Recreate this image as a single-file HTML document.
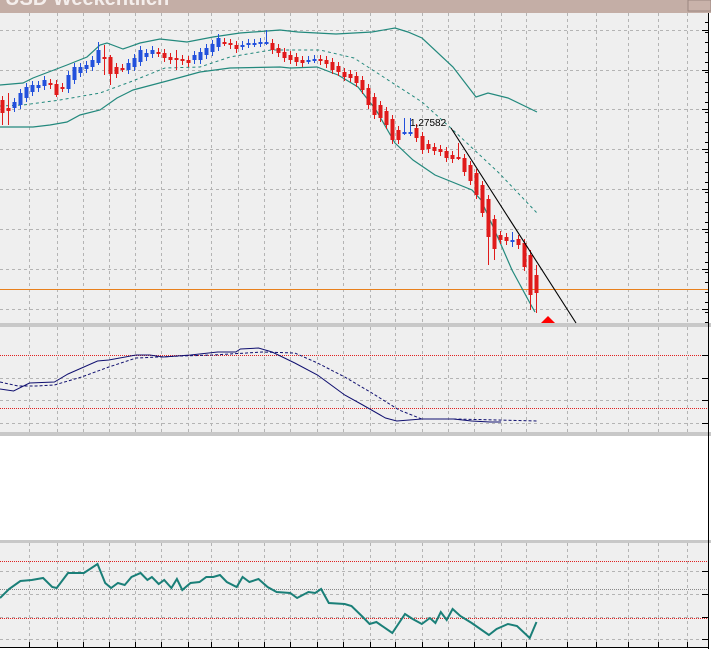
<!DOCTYPE html>
<html><head><meta charset="utf-8"><style>
html,body{margin:0;padding:0;width:711px;height:649px;overflow:hidden;background:#fff}
svg{display:block}
</style></head><body>
<svg id="s" width="711" height="649" xmlns="http://www.w3.org/2000/svg" font-family="Liberation Sans, sans-serif">
<rect x="0" y="0" width="711" height="649" fill="#ffffff"/>
<rect x="0" y="0" width="711" height="13" fill="#c4aea6"/>
<text x="-6" y="5" font-size="20" font-weight="bold" fill="#f4eeec">/ USD Weekentlich</text>
<rect x="688" y="0" width="23" height="11" fill="#c9b2aa" stroke="#9a8680" stroke-width="1"/>
<rect x="0" y="13" width="709" height="310" fill="#efefef"/>
<rect x="0" y="323" width="711" height="4" fill="#c8c8c8"/>
<rect x="0" y="327" width="709" height="105" fill="#efefef"/>
<rect x="0" y="432" width="711" height="4" fill="#c8c8c8"/>
<rect x="0" y="436" width="709" height="104" fill="#ffffff"/>
<rect x="0" y="540" width="711" height="3" fill="#c8c8c8"/>
<rect x="0" y="543" width="709" height="104" fill="#efefef"/>
<g id="g"></g>
</svg>
<script>
var g=document.getElementById('g'),h='';
function L(x1,y1,x2,y2,c,w,d){h+='<line x1="'+x1+'" y1="'+y1+'" x2="'+x2+'" y2="'+y2+'" stroke="'+c+'" stroke-width="'+(w||1)+'"'+(d?' stroke-dasharray="'+d+'"':'')+'/>';}
function P(pts,c,w,d){h+='<polyline fill="none" points="'+pts.map(function(p){return p.join(',')}).join(' ')+'" stroke="'+c+'" stroke-width="'+(w||1)+'"'+(d?' stroke-dasharray="'+d+'"':'')+'/>';}
var gx=[29,57,83,109,135,161,188,211,238,264,290,317,343,370,395,422,448,474,501,526,567,596,628,658,687];
var gc='#b4b4b4';
gx.forEach(function(x){L(x+.5,13,x+.5,323,gc,1,'3,3');L(x+.5,327,x+.5,432,gc,1,'3,3');L(x+.5,543,x+.5,647,gc,1,'3,3');L(x+.5,642,x+.5,647,'#000',1);});
[30,70,109,149,189,229,269,309].forEach(function(y){L(0,y+.5,702,y+.5,gc,1,'3,3');L(702,y+.5,709,y+.5,'#000',1);});
for(var y=22;y<323;y+=10){L(705,y+.5,709,y+.5,'#000',1);}
[378,400,423].forEach(function(y){L(0,y+.5,702,y+.5,gc,1,'3,3');L(702,y+.5,709,y+.5,'#000',1);});
L(0,355.5,709,355.5,'#e02020',1,'1,1');L(702,355.5,709,355.5,'#000',1);
L(0,408.5,709,408.5,'#e02020',1,'1,1');
[571,594,617,639].forEach(function(y){L(0,y+.5,702,y+.5,gc,1,'3,3');L(702,y+.5,709,y+.5,'#000',1);});
L(0,561.5,709,561.5,'#e02020',1,'1,1');L(0,618.5,709,618.5,'#e02020',1,'1,1');L(0,589.5,709,589.5,'#888',1,'1,1');
L(708.5,13,708.5,649,'#000',1);L(0,647.5,709,647.5,'#000',1);
L(0,289.5,708,289.5,'#e8801c',1);
var tc='#23897d';
P([[0,85],[23,83],[33,78],[67,65],[87,57],[100,45],[107,43],[123,49],[140,43],[160,39],[187,42],[213,37],[240,33],[267,31],[280,30],[298,32],[336,34],[372,32],[395,28],[408,32],[422,38],[453,67],[476,97],[488,93],[508,98],[537,112]],tc,1.2);
P([[0,106],[23,105],[60,100],[100,93],[130,82],[165,68],[200,67],[230,57],[271,50],[320,50],[354,58],[385,78],[422,102],[453,130],[499,173],[537,213]],tc,1,'3,3');
P([[0,127],[33,127],[50,125],[67,122],[80,115],[100,110],[117,98],[133,90],[167,81],[200,72],[230,68],[280,67],[290,68],[317,67],[338,75],[358,87],[376,110],[395,143],[413,160],[435,175],[472,190],[481,200],[499,240],[512,270],[531,305],[535,312]],tc,1.2);
var C=[[100,113],[108,111],[108,102],[105,93],[98,87],[92,85],[88,85],[86,80],[83,85],[84,95],[87,88],[89,75],[80,67],[73,67],[69,65],[67,60],[63,50],[57,58],[57,74],[67,74],[68,68],[70,63],[67,58],[62,50],[57,53],[54,50],[52,53],[53,58],[57,60],[58,59],[59,61],[60,63],[60,55],[60,52],[55,48],[52,44],[47,38],[42,42],[43,45],[45,49],[46,45],[44,43],[43,43],[43,42],[42,42],[43,50],[48,53],[52,58],[55,60],[57,62],[60,63],[60,60],[59,59],[59,61],[60,64],[62,70],[66,72],[72,77],[74,78],[76,83],[80,90],[88,105],[97,115],[105,118],[111,125],[119,140],[130,140],[133,132],[132,132],[128,138],[136,150],[144,149],[147,151],[149,152],[151,158],[155,159],[157,158],[158,172],[165,181],[173,195],[185,213],[199,237],[219,249],[235,240],[237,241],[240,240],[239,245],[243,267],[255,295],[275,293]];
var W={0:[96,125],1:[93,125],16:[42,65],17:[45,75],18:[55,85],44:[30,45],68:[118,136],67:[118,135],76:[143,160],81:[195,265],82:[215,260],85:[232,247],88:[250,310],89:[265,313],9:[80,97],29:[50,70]};
C.forEach(function(c,i){var x=2+6*i,o=c[0],cl=c[1];var blue=cl<o||(cl==o&&(i==51||i==52||i==67||i==68||i==85||i==42||i==43||i==44));var col=blue?'#2250dc':'#e01a1a';var t=Math.min(o,cl),b=Math.max(o,cl);var w=W[i]||[t-4,b+4];L(x+.5,w[0],x+.5,w[1],col,1);var bh=Math.max(b-t,1);h+='<rect x="'+(x-1.5)+'" y="'+t+'" width="4" height="'+(bh<2?2:bh)+'" fill="'+col+'"/>';});
L(451,128,576,323,'#000',1.1);
h+='<text x="410" y="126" font-size="10" fill="#000">1,27582</text>';
h+='<polygon points="541,323 548,316 555,323" fill="#ff0000"/>';
var s=2.205;
function sc(a){return a.map(function(p){return [+(p[0]/s).toFixed(1),p[1]]});}
P(sc([[0,389],[30,391],[65,383],[120,382],[150,374],[215,361],[240,360],[300,355],[330,355],[360,357],[420,355],[480,352],[520,352],[530,349],[570,348],[600,352],[650,363],[700,375],[760,395],[800,405],[850,418],[875,421],[930,419],[1000,419],[1040,421],[1080,422],[1105,422]]),'#101070',1);
P(sc([[0,382],[40,386],[80,386],[120,385],[180,377],[240,367],[300,358],[400,356],[470,355],[580,352],[650,353],[700,363],[760,377],[820,393],[880,410],[930,419],[1000,419],[1100,420],[1185,421]]),'#101070',1,'3,2');
P(sc([[0,598],[20,589],[45,581],[70,580],[95,578],[115,587],[125,588],[150,573],[185,573],[215,564],[232,583],[245,588],[260,583],[275,585],[290,577],[310,573],[325,580],[335,577],[350,584],[362,580],[378,588],[390,579],[402,590],[420,583],[440,582],[455,577],[470,577],[485,575],[500,582],[522,587],[535,577],[550,582],[570,579],[590,587],[610,592],[640,593],[655,598],[680,592],[695,593],[708,589],[725,603],[760,604],[775,606],[800,617],[815,624],[830,622],[865,633],[893,614],[910,619],[930,624],[948,618],[960,623],[972,612],[985,620],[998,609],[1015,616],[1040,623],[1078,635],[1095,629],[1120,624],[1140,626],[1168,638],[1183,622]]),'#1a7f78',2);
g.innerHTML=h;
</script>
</body></html>
